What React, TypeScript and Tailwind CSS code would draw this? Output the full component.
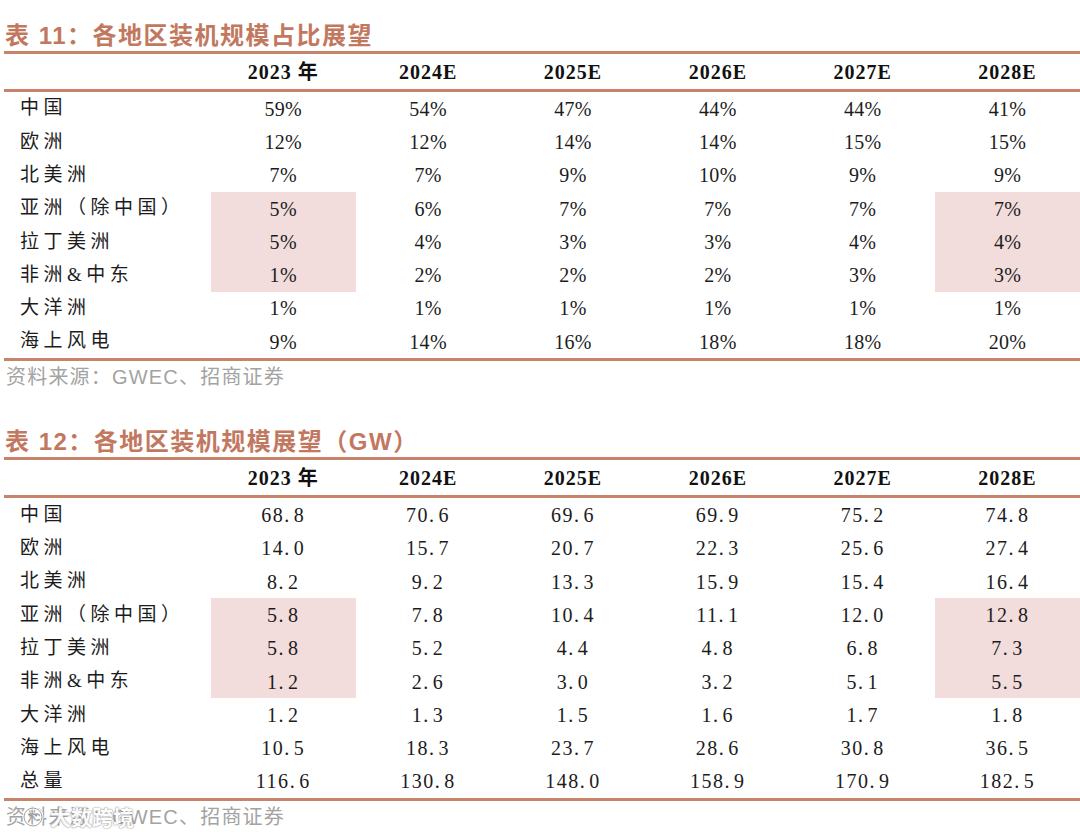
import React from "react";

const cols = ["2023 年", "2024E", "2025E", "2026E", "2027E", "2028E"];

const t1: [string, string[]][] = [
  ["中国", ["59%", "54%", "47%", "44%", "44%", "41%"]],
  ["欧洲", ["12%", "12%", "14%", "14%", "15%", "15%"]],
  ["北美洲", ["7%", "7%", "9%", "10%", "9%", "9%"]],
  ["亚洲（除中国）", ["5%", "6%", "7%", "7%", "7%", "7%"]],
  ["拉丁美洲", ["5%", "4%", "3%", "3%", "4%", "4%"]],
  ["非洲&中东", ["1%", "2%", "2%", "2%", "3%", "3%"]],
  ["大洋洲", ["1%", "1%", "1%", "1%", "1%", "1%"]],
  ["海上风电", ["9%", "14%", "16%", "18%", "18%", "20%"]],
];

const t2: [string, string[]][] = [
  ["中国", ["68.8", "70.6", "69.6", "69.9", "75.2", "74.8"]],
  ["欧洲", ["14.0", "15.7", "20.7", "22.3", "25.6", "27.4"]],
  ["北美洲", ["8.2", "9.2", "13.3", "15.9", "15.4", "16.4"]],
  ["亚洲（除中国）", ["5.8", "7.8", "10.4", "11.1", "12.0", "12.8"]],
  ["拉丁美洲", ["5.8", "5.2", "4.4", "4.8", "6.8", "7.3"]],
  ["非洲&中东", ["1.2", "2.6", "3.0", "3.2", "5.1", "5.5"]],
  ["大洋洲", ["1.2", "1.3", "1.5", "1.6", "1.7", "1.8"]],
  ["海上风电", ["10.5", "18.3", "23.7", "28.6", "30.8", "36.5"]],
  ["总量", ["116.6", "130.8", "148.0", "158.9", "170.9", "182.5"]],
];

const serif = "font-['Liberation_Serif','Noto_Sans_CJK_SC',serif]";

function Num({ v }: { v: string }) {
  const i = v.indexOf(".");
  if (i < 0) return <span className="tracking-[0.3px]">{v}</span>;
  return (
    <span className="tracking-[1.5px]">
      {v.slice(0, i)}
      <span className="mr-[3px]">.</span>
      {v.slice(i + 1)}
    </span>
  );
}

function Line() {
  return <div className="h-[3px] bg-[#c8836b]" />;
}

function Table({
  title,
  rows,
}: {
  title: React.ReactNode;
  rows: [string, string[]][];
}) {
  return (
    <div>
      <div className="h-[31px] flex items-center pl-[5px] text-[24px] font-bold leading-none text-[#c2785f] font-['Liberation_Sans','Noto_Sans_CJK_SC',sans-serif] tracking-[1.5px]">
        {title}
      </div>
      <div className="ml-[4px] w-[1076px]">
        <Line />
        <div className={`flex h-[35px] items-center text-[20px] font-bold text-[#111] ${serif}`}>
          <div className="w-[207px]" />
          {cols.map((c) => (
            <div key={c} className="w-[145px] text-center tracking-[1px] pt-[1px]">
              {c}
            </div>
          ))}
        </div>
        <Line />
        <div>
          {rows.map(([label, vals], ri) => (
            <div key={label} className="flex h-[33.3px] items-center text-[#1c1c1c]">
              <div className="w-[207px] h-full flex items-center pl-[16px] text-[19px] tracking-[4.5px] font-['Liberation_Serif','Noto_Sans_CJK_SC',serif]">
                {label}
              </div>
              {vals.map((v, ci) => {
                const shaded = ri >= 3 && ri <= 5 && (ci === 0 || ci === 5);
                return (
                  <div
                    key={ci}
                    className={`w-[145px] h-full flex items-center justify-center text-[20px] ${serif} ${
                      shaded ? "bg-[#f2dcdc]" : ""
                    }`}
                  >
                    <Num v={v} />
                  </div>
                );
              })}
            </div>
          ))}
        </div>
        <Line />
      </div>
    </div>
  );
}

function Source() {
  return (
    <div className="h-[31px] flex items-center pl-[6px] text-[20px] text-[#a3a3a3] font-['Liberation_Sans','Noto_Sans_CJK_SC',sans-serif] tracking-[1.2px]">
      资料来源：GWEC、招商证券
    </div>
  );
}

export default function App() {
  return (
    <div className="relative w-[1080px] h-[839px] bg-white overflow-hidden">
      <div className="pt-[20px]">
        <Table title={<span>表 11：各地区装机规模占比展望</span>} rows={t1} />
        <Source />
        <div className="h-[34px]" />
        <Table title={<span>表 12：各地区装机规模展望（GW）</span>} rows={t2} />
        <Source />
      </div>
      <div className="absolute left-[22px] top-[801px] flex items-center gap-[4px] text-[21px] font-bold text-white font-['Noto_Sans_CJK_SC',sans-serif] [text-shadow:0_0_2px_#8a8a8a,0_0_1px_#8a8a8a] opacity-90">
        <svg width="22" height="22" viewBox="0 0 22 22" className="mr-[2px]">
          <circle cx="11" cy="11" r="9" fill="none" stroke="#fff" strokeWidth="3" />
          <circle cx="11" cy="11" r="9" fill="none" stroke="#9a9a9a" strokeWidth="1" />
          <circle cx="8" cy="9" r="1.5" fill="#9a9a9a" />
          <circle cx="14" cy="9" r="1.5" fill="#9a9a9a" />
        </svg>
        <span>大数跨境</span>
      </div>
    </div>
  );
}
